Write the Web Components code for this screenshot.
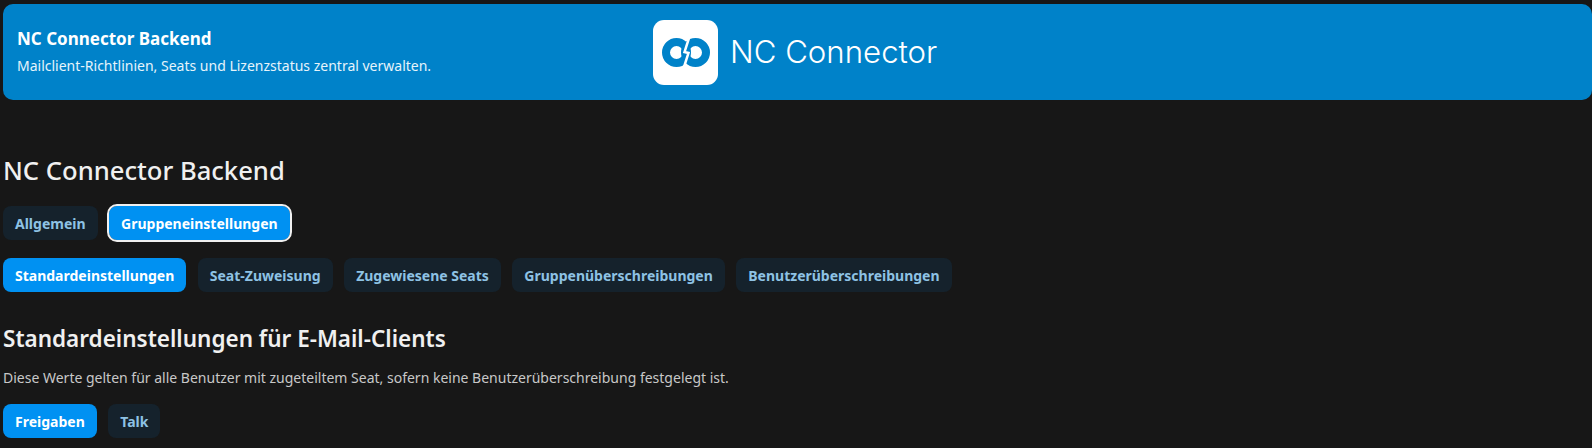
<!DOCTYPE html>
<html lang="de"><head><meta charset="utf-8"><title>NC Connector Backend</title>
<style>
html,body{margin:0;padding:0;background:#171717;overflow:hidden;height:448px}
body{font-family:"Noto Sans","Open Sans",sans-serif;color:#f0f0f0}
</style></head><body>
<nc-app></nc-app>
<template id="t-banner"><style>
:host{display:grid;grid-template-columns:640px auto 1fr;align-items:center;height:96px;margin:4px 0 0 3px;background:#0082c9;border-radius:10px;color:#fff}
.t{padding-left:14px;display:flex;flex-direction:column;gap:6px}
.a{font-size:17px;font-weight:700;line-height:22px}
.b{font-size:14px;line-height:20px;color:#e6f4fb}
.logo{display:flex;align-items:center;gap:12px;margin-left:10px}
.sq{width:65px;height:65px;border-radius:11px;background:#fff;display:flex;align-items:center;justify-content:center}
.n{font-family:Inter,sans-serif;font-size:31.2px;font-weight:300;color:#fff}
</style><div class="t"><div class="a"><slot name="title"></slot></div><div class="b"><slot name="sub"></slot></div></div>
<div class="logo"><div class="sq"><svg width="48" height="29" viewBox="0 0 48 29" fill="none"><circle cx="14.500" cy="14.500" r="10.500" stroke="#0082c9" stroke-width="8"/><circle cx="33.500" cy="14.500" r="10.500" stroke="#0082c9" stroke-width="8"/><path d="M27 0L22.500 14L26.500 15L22 29" stroke="#fff" stroke-width="2.500"/></svg></div><div class="n"><slot name="brand"></slot></div></div></template>
<template id="t-btn"><style>
:host{display:inline-flex;align-items:center;height:34px;padding:0 12px;border-radius:8px;background:#15222c;color:#8ec2e4;font-size:14px;font-weight:700;white-space:nowrap;box-sizing:border-box}
:host([active]){background:#0091f2;color:#fff}
:host([outlined]){outline:2px solid #f0f0f0;outline-offset:0}
</style><slot></slot></template>
<template id="t-row"><style>:host{display:flex;gap:11.500px;padding-left:3px}</style><slot></slot></template>
<template id="t-app"><style>
:host{display:block}
h1{font-size:25.6px;font-weight:500;line-height:32px;margin:55px 0 0 3px;color:#f0f0f0}
h2{font-size:22.5px;font-weight:600;line-height:28px;margin:33px 0 0 3px;color:#f0f0f0}
p{font-size:14px;line-height:20px;margin:15px 0 0 3px;color:#c8c8c8}
.r1{margin-top:19px}.r2{margin-top:18px}.r3{margin-top:16px}
</style>
<nc-banner><span slot="title">NC Connector Backend</span><span slot="sub">Mailclient-Richtlinien, Seats und Lizenzstatus zentral verwalten.</span><span slot="brand">NC Connector</span></nc-banner>
<h1>NC Connector Backend</h1>
<nc-row class="r1"><nc-btn>Allgemein</nc-btn><nc-btn active outlined>Gruppeneinstellungen</nc-btn></nc-row>
<nc-row class="r2"><nc-btn active>Standardeinstellungen</nc-btn><nc-btn>Seat-Zuweisung</nc-btn><nc-btn>Zugewiesene Seats</nc-btn><nc-btn>Gruppenüberschreibungen</nc-btn><nc-btn>Benutzerüberschreibungen</nc-btn></nc-row>
<h2>Standardeinstellungen für E-Mail-Clients</h2>
<p>Diese Werte gelten für alle Benutzer mit zugeteiltem Seat, sofern keine Benutzerüberschreibung festgelegt ist.</p>
<nc-row class="r3"><nc-btn active>Freigaben</nc-btn><nc-btn>Talk</nc-btn></nc-row>
</template>
<script>
const def=(n,t)=>customElements.define(n,class extends HTMLElement{constructor(){super();this.attachShadow({mode:"open"}).appendChild(document.getElementById(t).content.cloneNode(true))}});
def("nc-banner","t-banner");def("nc-btn","t-btn");def("nc-row","t-row");def("nc-app","t-app");
</script></body></html>
